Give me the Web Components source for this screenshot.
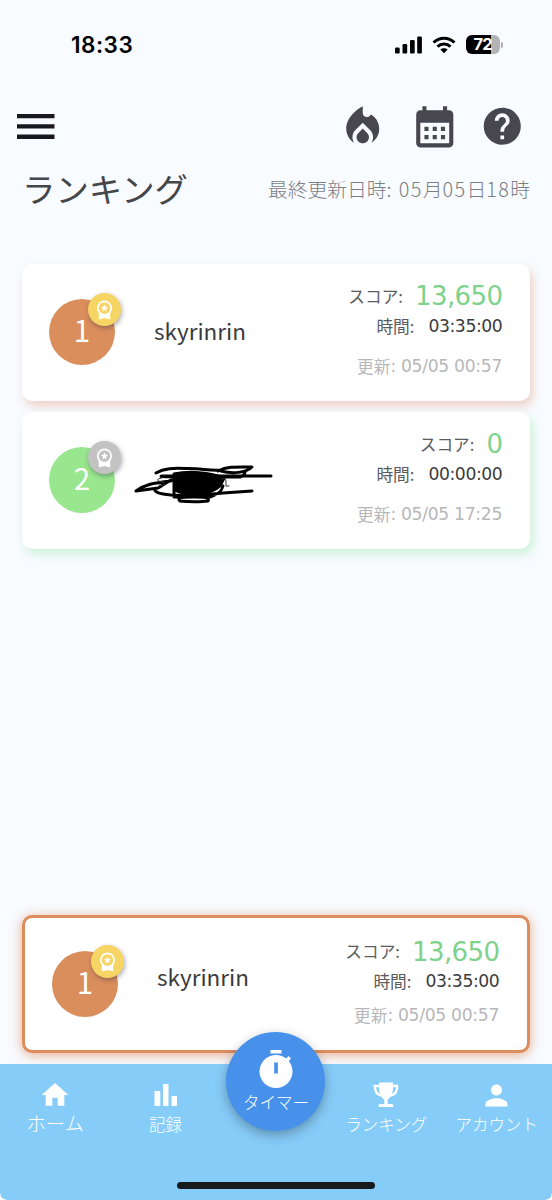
<!DOCTYPE html>
<html lang="ja">
<head>
<meta charset="utf-8">
<title>ランキング</title>
<style>
html,body{margin:0;padding:0;background:#fff}
body{font-family:"Noto Sans CJK JP","Noto Sans",sans-serif}
</style>
</head>
<body>
<ranking-app></ranking-app>
<script>
const define=(name,html,setup)=>{
  const t=document.createElement('template');
  t.innerHTML=html;
  customElements.define(name,class extends HTMLElement{
    constructor(){super();this.attachShadow({mode:'open'}).append(t.content.cloneNode(true));}
    connectedCallback(){if(setup)setup(this,this.shadowRoot);}
  });
};

define('status-bar',`
<style>
:host{display:flex;height:90px;box-sizing:border-box;padding:33px 49px 0 71px;justify-content:space-between;align-items:flex-start;color:#000}
time{font:600 22.5px/24px Inter,sans-serif;letter-spacing:.5px}
.r{display:flex;gap:10px;align-items:center;padding-top:2px}
svg{display:block}
.b{position:relative;display:flex;align-items:center;gap:1px}
.cell{width:34.5px;height:19px;border-radius:6px;background:linear-gradient(90deg,#000 73%,#b3b3b6 73%);color:#fff;font:700 16.5px/19px Inter,sans-serif;text-align:center;letter-spacing:-.8px}
.tip{width:2px;height:6px;border-radius:0 3px 3px 0;background:#aaa}
</style>
<time>18:33</time>
<div class="r">
<svg width="28" height="18" viewBox="0 0 28 18"><rect x="1" y="11.5" width="4.7" height="6" rx="1.3"/><rect x="8.5" y="8" width="4.7" height="9.5" rx="1.3"/><rect x="16" y="4" width="4.7" height="13.5" rx="1.3"/><rect x="23.2" y=".5" width="4.7" height="17" rx="1.3"/></svg>
<svg width="24" height="18" viewBox="0 0 24 18" fill="none" stroke="#000" stroke-width="3"><path d="M1.500 6.500C7.500.7 16.500.7 22.500 6.500M5.500 10.700c3.700-3.500 9.300-3.500 13 0"/><path d="M12 17.300l3.700-3.700c-2.100-1.900-5.300-1.900-7.400 0z" fill="#000" stroke="none"/></svg>
<div class="b"><div class="cell">72</div><div class="tip"></div></div>
</div>`);

define('app-toolbar',`
<style>
:host{display:flex;height:74px;align-items:flex-start;padding:12px 27.5px 0 17px;box-sizing:border-box;color:#48464f}
svg{display:block;fill:currentColor}
.menu{margin-top:12px;margin-right:auto;color:#1a181f}
.fire{margin-right:22px}.cal{margin-right:21px}.help{margin:2px 0 0}
</style>
<svg class="menu" width="38" height="26" viewBox="0 0 38 26"><path d="M0 0h37.500v4.200H0zM0 10.300h37.500v4.200H0zM0 20.600h37.500v4.300H0z"/></svg>
<svg class="fire" width="49.500" height="49.500" viewBox="0 0 24 24"><path d="m12 12.900-2.130 2.090c-.56.56-.87 1.290-.87 2.070C9 18.680 10.350 20 12 20s3-1.320 3-2.940c0-.78-.31-1.520-.87-2.070L12 12.900z"/><path d="m16 6-.44.55C14.380 8.020 12 7.190 12 5.300V2S4 6 4 13c0 2.920 1.560 5.470 3.890 6.860-.56-.79-.89-1.760-.89-2.800 0-1.320.52-2.560 1.470-3.500L12 10.100l3.530 3.470c.95.930 1.470 2.170 1.470 3.500 0 1.020-.31 1.960-.85 2.750 1.890-1.150 3.290-3.060 3.710-5.300.66-3.550-1.070-6.900-3.860-8.520z"/></svg>
<svg class="cal" width="49.500" height="49.500" viewBox="0 0 24 24"><path d="M19 4h-1V2h-2v2H8V2H6v2H5c-1.110 0-1.990.9-1.990 2L3 20c0 1.100.89 2 2 2h14c1.100 0 2-.9 2-2V6c0-1.100-.9-2-2-2zm0 16H5V10h14v10zM9 14H7v-2h2v2zm4 0h-2v-2h2v2zm4 0h-2v-2h2v2zm-8 4H7v-2h2v2zm4 0h-2v-2h2v2zm4 0h-2v-2h2v2z"/></svg>
<svg class="help" width="44.500" height="44.500" viewBox="0 0 24 24"><path d="M12 2C6.480 2 2 6.480 2 12s4.480 10 10 10 10-4.480 10-10S17.520 2 12 2zm1 17h-2v-2h2v2zm2.070-7.750l-.9.920C13.450 12.900 13 13.500 13 15h-2v-.5c0-1.100.45-2.100 1.170-2.830l1.240-1.260c.37-.36.59-.86.59-1.410 0-1.100-.9-2-2-2s-2 .9-2 2H8c0-2.210 1.790-4 4-4s4 1.790 4 4c0 .88-.36 1.680-.93 2.250z"/></svg>`);

define('page-heading',`
<style>
:host{display:flex;height:99px;justify-content:space-between;align-items:flex-start;padding:0 22px 0 22px;box-sizing:border-box}
h1{margin:4px 0 0;font-size:33.4px;line-height:40px;font-weight:400;color:#444649}
p{margin:10px 0 0;font-size:19.800px;line-height:30px;font-weight:300;color:#7b7e82;white-space:pre}
i{font-style:normal;letter-spacing:1.4px}
</style>
<h1>ランキング</h1>
<p>最終更新日時<i>: 05</i>月<i>05</i>日<i>18</i>時</p>`);

define('rank-avatar',`
<style>
:host{display:block;position:relative;width:66px;height:66px;border-radius:50%;background:var(--tone);color:#fff;font-size:29.5px;line-height:61px;text-align:center}
.m{position:absolute;left:39px;top:-6px;width:33px;height:33px;border-radius:50%;background:var(--medal);box-shadow:1px 2px 5px rgba(40,40,60,.4)}
svg{display:block;width:33px;height:33px}
</style>
<slot></slot><div class="m"><svg viewBox="0 0 33 33"><path d="M10.800 19V26.600l5.700-1.500 5.700 1.500V19z" fill="#fff"/><circle cx="16.500" cy="15" r="6.700" fill="var(--medal)" stroke="#fff" stroke-width="1.700"/><path d="M16.500 11.500l1 2.300 2.500.3-1.900 1.700.5 2.500-2.100-1.300-2.100 1.300.5-2.500-1.900-1.700 2.500-.3z" fill="#fff"/></svg></div>`);

define('score-card',`
<style>
:host{display:flex;box-sizing:border-box;width:508px;height:137.500px;border-radius:10px;background:#fff;padding:0 28px 0 27px;color:#3b3b3d;box-shadow:3px 5px 10px var(--glow);position:relative}
:host([mine]){border:3px solid #dc8c5d;height:138px;box-shadow:0 2px 12px rgba(220,130,80,.65)}
rank-avatar{margin-top:35.5px;flex:none}
:host([mine]) rank-avatar{margin-top:33px}
.name{margin:50px 0 0 39px;font-size:22.500px;line-height:32px;width:140px}
:host([mine]) .name{margin-top:42px}
dl{margin:14px 0 0 auto;display:flex;flex-direction:column;align-items:flex-end}
:host([mine]) dl{margin-top:15px}
div{display:flex;align-items:center;justify-content:flex-end;height:36px;line-height:36px}
dt,dd{margin:0;white-space:pre}
dt{font-size:16.700px;color:#5c5c5e}
dd{font-family:"DejaVu Sans",sans-serif;font-size:17.200px;letter-spacing:-.4px;margin-left:14px;margin-right:-.4px}
.s dd{font-size:26px;letter-spacing:-.6px;color:#7ed28b;margin-left:12px;padding-top:1px}
.t{height:30px;line-height:30px;margin-top:-3px}
.u{font-size:17.200px;letter-spacing:-.32px;color:#b7b7b9;height:30px;line-height:30px;margin-top:10px;white-space:pre;font-family:"DejaVu Sans",sans-serif}
.u b{font:400 16.700px/30px "Noto Sans CJK JP",sans-serif;letter-spacing:0}
:host([mine]) .u{margin-top:4px}
</style>
<rank-avatar></rank-avatar>
<span class="name"><slot></slot></span>
<dl><div class="s"><dt>スコア:</dt><dd></dd></div><div class="t"><dt>時間:</dt><dd></dd></div><div class="u"></div></dl>`,
(el,r)=>{
  const a=k=>el.getAttribute(k),d=r.querySelectorAll('dd');
  r.querySelector('rank-avatar').textContent=a('rank');
  d[0].textContent=a('score');d[1].textContent=a('time');
  r.querySelector('.u').innerHTML='<b>更新</b>: '+a('updated');
});

define('redaction-mark',`
<style>:host{display:block;margin:2px 0 0 -20px;width:140px;height:42px}svg{display:block}</style>
<svg width="140" height="42" viewBox="0 0 140 42" fill="none" stroke="#000" stroke-width="3" stroke-linecap="round" stroke-linejoin="round"><path d="M22 9c8-5 18-5 30-4.500 14-.5 25 3 36 1.500M84 7c10-5 20-4 34-4-6 6-20 7-31 4M137 12H28c-6 1 18 1 33 1h45c3-1 5-3 5-5M2 27c8-6 16-8 35-10M2 27l22-3c6-3 11-8 16-9M22 24c-4 4 4 6 15 7l20 1 32-3 29-2M40 16v17h36c10-3 12-7 13-11M46 37c-4-4 4-4 14-4s16 0 14 4c-6 1-20 1-28 0"/><path d="M40 10c14-3 36-2 50 4l-4 8c-10 9-32 11-45 4z" fill="#000"/><path d="M28 14c-7 1-5 3 0 4s3 5-3 3M88 15c3-1 4 0 4 3v4h3" stroke="#333" stroke-width="1"/></svg>`);

define('nav-item',`
<style>
:host{display:flex;flex-direction:column;align-items:center;width:110.400px;color:#fff;font-weight:300;font-size:16.500px;line-height:24px;white-space:nowrap}
.i{height:32px;margin-top:15px;display:flex;align-items:center}
::slotted(svg){display:block;fill:#fff}
.l{margin-top:1px}
:host([large]) .l{font-size:19.300px;margin-top:0}
:host([fab]){box-sizing:border-box;width:99px;height:99px;margin:-32px 5.700px 0;border-radius:50%;background:#4891eb;box-shadow:0 4px 12px rgba(0,0,0,.3);z-index:2}
:host([fab]) .i{height:42px;margin-top:17px}
:host([fab]) .l{margin-top:-1px}
</style>
<span class="i"><slot name="icon"></slot></span><span class="l"><slot></slot></span>`);

define('bottom-nav',`
<style>
:host{display:block;position:relative;height:136px;background:#86ccf9;border-radius:0 0 7px 7px}
nav{display:flex;align-items:flex-start;height:121px}
.home{width:198px;height:7px;border-radius:4px;background:#181b1e;margin:-3px auto 0}
</style>
<nav>
<nav-item large><svg slot="icon" width="32" height="32" viewBox="0 0 24 24"><path d="M10 20v-6h4v6h5v-8h3L12 3 2 12h3v8z"/></svg>ホーム</nav-item>
<nav-item><svg slot="icon" width="24" height="24" viewBox="0 0 24 24"><path d="M.5 8h5.800v15H.5zM9 1h5.500v22H9zM17.500 13h5.500v10h-5.500z"/></svg>記録</nav-item>
<nav-item fab><svg slot="icon" width="42" height="42" viewBox="0 0 42 42"><path d="M15.500 1h11v3.500h-11z"/><circle cx="21" cy="22.500" r="16.500"/><path d="M30 11l3.500-4 2.500 2.500-3.500 4z"/><path d="M19.200 13.500h3.700v11h-3.700z" fill="#4891eb"/></svg>タイマー</nav-item>
<nav-item><svg slot="icon" width="26" height="26" viewBox="0 0 26 26"><path d="M6 .5h14v4c0 7-2 11-5.300 13v4.500H19c1 0 1.500 1 1.500 3h-15c0-2 .5-3 1.500-3h4.300v-4.500C8 15.500 6 11.500 6 4.500z"/><path d="M7 4H1.800c0 5 1.700 9 7.200 9.500M19 4h5.200c0 5-1.700 9-7.200 9.500" fill="none" stroke="#fff" stroke-width="2.400"/></svg>ランキング</nav-item>
<nav-item><svg slot="icon" width="33" height="33" viewBox="0 0 24 24"><path d="M12 12c2.210 0 4-1.790 4-4s-1.790-4-4-4-4 1.790-4 4 1.790 4 4 4zm0 2c-2.670 0-8 1.340-8 4v2h16v-2c0-2.660-5.330-4-8-4z"/></svg>アカウント</nav-item>
</nav><div class="home"></div>`);

define('ranking-app',`
<style>
:host{display:flex;flex-direction:column;width:552px;height:1200px;background:#f8fbff;overflow:hidden;border-radius:0 0 7px 7px}
main{display:flex;flex-direction:column;align-items:center;gap:10.700px;flex:1;padding-top:.5px}
.o{--tone:#da8e5c;--medal:#f7d564;--glow:rgba(220,130,90,.34)}
.g{--tone:#98e68d;--medal:#c3c3c3;--glow:rgba(130,225,150,.36)}
.mine{margin-top:auto;margin-bottom:11px}
</style>
<status-bar></status-bar><app-toolbar></app-toolbar><page-heading></page-heading>
<main>
<score-card class="o" rank="1" score="13,650" time="03:35:00" updated="05/05 00:57">skyrinrin</score-card>
<score-card class="g" rank="2" score="0" time="00:00:00" updated="05/05 17:25"><redaction-mark></redaction-mark></score-card>
<score-card mine class="o mine" rank="1" score="13,650" time="03:35:00" updated="05/05 00:57">skyrinrin</score-card>
</main>
<bottom-nav></bottom-nav>`);
</script>
</body>
</html>
